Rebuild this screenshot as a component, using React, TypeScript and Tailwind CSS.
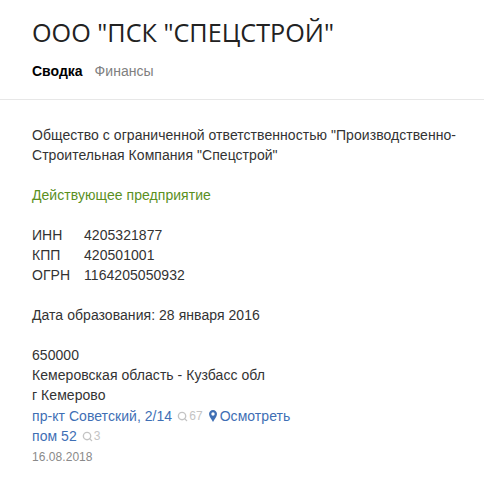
import { Search } from "lucide-react";

export default function App() {
    return (
        <div className="w-[484px] h-[479px] overflow-hidden bg-white text-[#333] font-['Liberation_Sans',Arial,sans-serif] text-[14px] leading-[20px] tracking-[0.05px]">
            {/* Header */}
            <div className="h-[100px] px-8 pt-[15px] border-b border-[#e7e7e7]">
                <h1 className="font-['Open_Sans',sans-serif] text-[25.2px] leading-[34px] tracking-normal text-[#222]">ООО "ПСК "СПЕЦСТРОЙ"</h1>
                <div className="flex gap-3 mt-[12px]">
                    <span className="font-bold text-black tracking-normal">Сводка</span>
                    <span className="text-[#808080]">Финансы</span>
                </div>
            </div>

            {/* Company info */}
            <div className="pl-8 pr-4 pt-[25px]">
                <p>Общество с ограниченной ответственностью "Производственно-Строительная Компания "Спецстрой"</p>
                <p className="mt-5 text-[#5a8f1e]">Действующее предприятие</p>

                <div className="mt-5 grid grid-cols-[52px_1fr]">
                    <span>ИНН</span>
                    <span>4205321877</span>
                    <span>КПП</span>
                    <span>420501001</span>
                    <span>ОГРН</span>
                    <span>1164205050932</span>
                </div>

                <p className="mt-5">Дата образования: 28 января 2016</p>

                <div className="mt-5">
                    <p>650000</p>
                    <p>Кемеровская область - Кузбасс обл</p>
                    <p>г Кемерово</p>
                    <div className="flex items-center text-[#3f6fb5] mt-px">
                        <span>пр-кт Советский, 2/14</span>
                        <Search className="w-[11px] h-[11px] ml-[5px] text-[#c4c4c4]" strokeWidth={3} />
                        <span className="text-[12px] text-[#c4c4c4] ml-px">67</span>
                        <svg viewBox="0 0 8 12" className="w-[8px] h-[12px] ml-[6px]">
                            <path
                                fillRule="evenodd"
                                fill="#3f6fb5"
                                d="M4 0C1.8 0 0 1.8 0 4c0 2.6 2.7 5.6 4 8 1.3-2.4 4-5.4 4-8 0-2.2-1.8-4-4-4zm0 2.3a1.7 1.7 0 1 1 0 3.4 1.7 1.7 0 0 1 0-3.4z"
                            />
                        </svg>
                        <span className="ml-[3px]">Осмотреть</span>
                    </div>
                    <div className="flex items-center text-[#3f6fb5]">
                        <span>пом 52</span>
                        <Search className="w-[11px] h-[11px] ml-[5px] text-[#c4c4c4]" strokeWidth={3} />
                        <span className="text-[12px] text-[#c4c4c4] ml-px">3</span>
                    </div>
                    <p className="text-[12px] text-[#8a8a8a] mt-px">16.08.2018</p>
                </div>
            </div>
        </div>
    );
}
